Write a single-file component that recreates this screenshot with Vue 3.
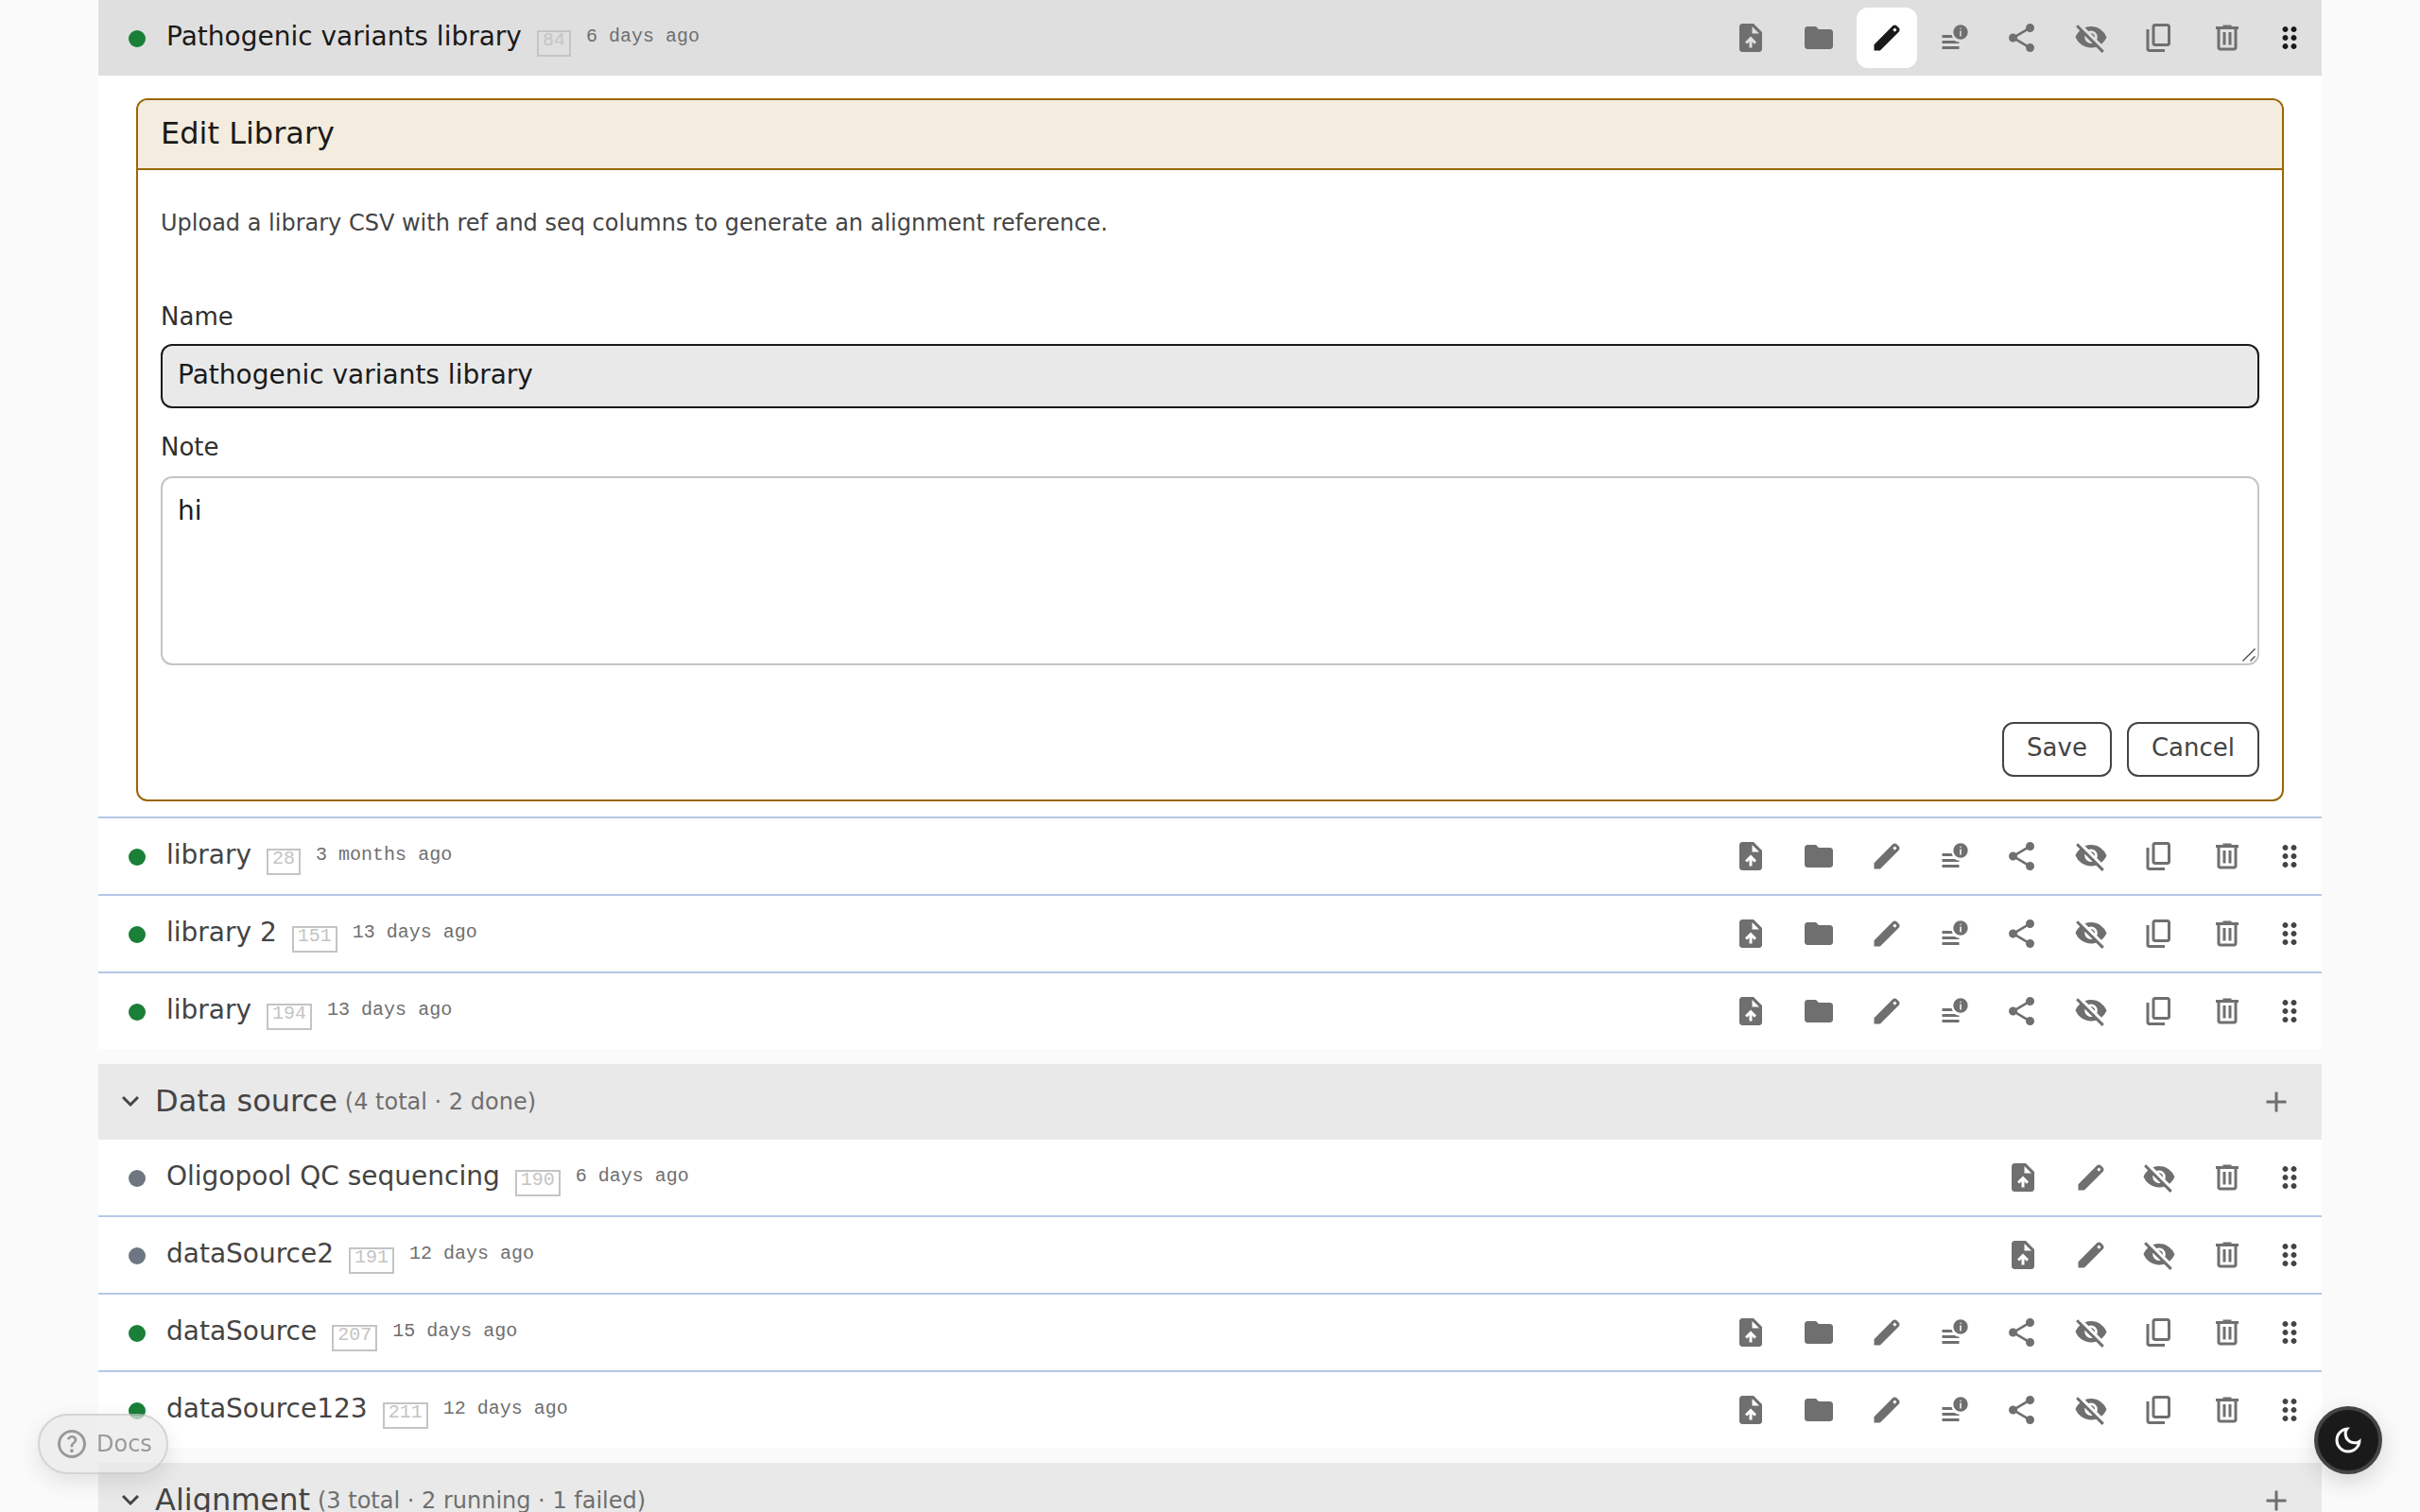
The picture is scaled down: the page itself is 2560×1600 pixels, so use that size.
<script setup>
import { ref } from "vue"

const icons = {
    upload: "M440-200h80v-167l64 64 56-57-160-160-160 160 57 56 63-63v167ZM240-80q-33 0-56.5-23.5T160-160v-640q0-33 23.5-56.5T240-880h320l240 240v480q0 33-23.5 56.5T720-80H240Zm280-520h200L520-800v200Z",
    folder: "M160-160q-33 0-56.5-23.5T80-240v-480q0-33 23.5-56.5T160-800h240l80 80h320q33 0 56.5 23.5T880-640v400q0 33-23.5 56.5T800-160H160Z",
    edit: "M120-120v-170l528-527q12-11 26.5-17t30.5-6q16 0 31 6t26 18l55 56q12 11 17.5 26t5.5 30q0 16-5.5 30.5T817-647L290-120H120Zm584-528 56-56-56-56-56 56 56 56Z",
    info: "M640-435q-85 0-145-60T435-640q0-85 60-145T640-845q85 0 145 60T845-640q0 85-60 145T640-435Zm-20-85h40v-160h-40v160Zm20-200q8 0 14-6t6-14q0-8-6-14t-14-6q-8 0-14 6t-6 14q0 8 6 14t14 6ZM120-160v-80h480v80H120Zm0-160v-80h360q25 20 54.500 30t65.500 10v40H120Zm0-160v-80h268q6 22 14 42t20 38H120Z",
    share: "M680-80q-50 0-85-35t-35-85q0-6 3-28L282-392q-16 15-37 23.5t-45 8.5q-50 0-85-35t-35-85q0-50 35-85t85-35q24 0 45 8.5t37 23.5l281-164q-2-7-2.5-13.5T560-760q0-50 35-85t85-35q50 0 85 35t35 85q0 50-35 85t-85 35q-24 0-45-8.5T598-672L317-508q2 7 2.5 13.5t.5 14.5q0 8-.5 14.5T317-452l281 164q16-15 37-23.5t45-8.5q50 0 85 35t35 85q0 50-35 85t-85 35Z",
    hide: "M792-56 624-222q-35 11-70.5 16.5T480-200q-151 0-269-83.5T40-500q21-53 53-98.5t73-81.5L56-792l56-56 736 736-56 56ZM480-320q11 0 20.5-1t20.5-4L305-541q-3 11-4 20.500t-1 20.500q0 75 52.500 127.500T480-320Zm292 18L645-428q7-17 11-34.500t4-37.500q0-75-52.500-127.500T480-680q-20 0-37.500 4T408-664L306-766q41-17 84-25.500t90-8.500q151 0 269 83.500T920-500q-23 59-60.500 109.500T772-302ZM587-486 467-606q28-5 51.500 4.500T559-574q17 18 24.500 41.500T587-486Z",
    copy: "M360-240q-33 0-56.5-23.5T280-320v-480q0-33 23.5-56.5T360-880h360q33 0 56.5 23.5T800-800v480q0 33-23.5 56.5T720-240H360Zm0-80h360v-480H360v480ZM200-80q-33 0-56.5-23.5T120-160v-560h80v560h440v80H200Z",
    trash: "M280-120q-33 0-56.5-23.5T200-200v-520h-40v-80h200v-40h240v40h200v80h-40v520q0 33-23.5 56.5T680-120H280Zm400-600H280v520h400v-520ZM360-280h80v-360h-80v360Zm160 0h80v-360h-80v360Z",
    drag: "M360-160q-33 0-56.5-23.5T280-240q0-33 23.5-56.5T360-320q33 0 56.5 23.5T440-240q0 33-23.5 56.5T360-160Zm240 0q-33 0-56.5-23.5T520-240q0-33 23.5-56.5T600-320q33 0 56.5 23.5T680-240q0 33-23.5 56.5T600-160ZM360-400q-33 0-56.5-23.5T280-480q0-33 23.5-56.5T360-560q33 0 56.5 23.5T440-480q0 33-23.5 56.5T360-400Zm240 0q-33 0-56.5-23.5T520-480q0-33 23.5-56.5T600-560q33 0 56.5 23.5T680-480q0 33-23.5 56.5T600-400ZM360-640q-33 0-56.5-23.5T280-720q0-33 23.5-56.5T360-800q33 0 56.5 23.5T440-720q0 33-23.5 56.5T360-640Zm240 0q-33 0-56.5-23.5T520-720q0-33 23.5-56.5T600-800q33 0 56.5 23.5T680-720q0 33-23.5 56.5T600-640Z",
    add: "M440-440H200v-80h240v-240h80v240h240v80H520v240h-80v-240Z",
    expand: "M480-344 240-584l56-56 184 184 184-184 56 56-240 240Z",
    help: "M478-240q21 0 35.5-14.5T528-290q0-21-14.5-35.5T478-340q-21 0-35.5 14.5T428-290q0 21 14.5 35.5T478-240Zm-36-154h74q0-33 7.5-52t42.5-52q26-26 41-49.5t15-56.5q0-56-41-86t-97-30q-57 0-92.5 30T342-618l66 26q5-18 22.5-39t53.5-21q32 0 48 17.5t16 38.5q0 20-12 37.5T506-526q-44 39-54 59t-10 73Zm38 314q-83 0-156-31.5T197-197q-54-54-85.5-127T80-480q0-83 31.5-156T197-763q54-54 127-85.5T480-880q83 0 156 31.5T763-763q54 54 85.5 127T880-480q0 83-31.5 156T763-197q-54 54-127 85.5T480-80Zm0-80q134 0 227-93t93-227q0-134-93-227t-227-93q-134 0-227 93t-93 227q0 134 93 227t227 93Z",
    moon: "M480-120q-150 0-255-105T120-480q0-150 105-255t255-105q14 0 27.5 1t26.5 3q-41 29-65.5 75.5T444-660q0 90 63 153t153 63q55 0 101-24.5t75-65.5q2 13 3 26.5t1 27.5q0 150-105 255T480-120Zm0-80q88 0 158-48.5T740-375q-20 5-40 8t-40 3q-123 0-209.5-86.5T364-660q0-20 3-40t8-40q-78 32-126.5 102T200-480q0 116 82 198t198 82Z",
}

const full = ['upload', 'folder', 'edit', 'info', 'share', 'hide', 'copy', 'trash']
const short = ['upload', 'edit', 'hide', 'trash']

const name = ref("Pathogenic variants library")
const note = ref("hi")
const editing = ref(84)

const groups = ref([
    {
        items: [
            { id: 84, name: "Pathogenic variants library", time: "6 days ago", status: "done", actions: full },
            { id: 28, name: "library", time: "3 months ago", status: "done", actions: full },
            { id: 151, name: "library 2", time: "13 days ago", status: "done", actions: full },
            { id: 194, name: "library", time: "13 days ago", status: "done", actions: full },
        ],
    },
    {
        title: "Data source",
        summary: "(4 total · 2 done)",
        items: [
            { id: 190, name: "Oligopool QC sequencing", time: "6 days ago", status: "idle", actions: short },
            { id: 191, name: "dataSource2", time: "12 days ago", status: "idle", actions: short },
            { id: 207, name: "dataSource", time: "15 days ago", status: "done", actions: full },
            { id: 211, name: "dataSource123", time: "12 days ago", status: "done", actions: full },
        ],
    },
    {
        title: "Alignment",
        summary: "(3 total · 2 running · 1 failed)",
        items: [],
    },
])

const actionClick = (item, action) => {
    if (action == 'edit') {
        editing.value = editing.value == item.id ? null : item.id;
    }
}
</script>

<template>
    <div class="page">
        <div class="group" v-for="(group, i) in groups" :key="i">
            <div class="group-header" v-if="group.title">
                <svg class="icon" viewBox="0 -960 960 960"><path :d="icons.expand" /></svg>
                <span class="group-title">{{ group.title }}</span>
                <span class="group-summary">{{ group.summary }}</span>
                <button class="action add"><svg class="icon" viewBox="0 -960 960 960"><path :d="icons.add" /></svg></button>
            </div>
            <div class="item" v-for="item in group.items" :key="item.id">
                <div class="row" :class="{ selected: editing == item.id }">
                    <span class="dot" :class="item.status"></span>
                    <span class="item-name">{{ item.name }}</span>
                    <span class="tag">{{ item.id }}</span>
                    <span class="time">{{ item.time }}</span>
                    <div class="actions">
                        <button
                            v-for="action in item.actions"
                            :key="action"
                            class="action"
                            :class="{ active: action == 'edit' && editing == item.id }"
                            @click="actionClick(item, action)"
                        >
                            <svg class="icon" viewBox="0 -960 960 960"><path :d="icons[action]" /></svg>
                        </button>
                        <svg class="icon drag" viewBox="0 -960 960 960"><path :d="icons.drag" /></svg>
                    </div>
                </div>
                <div class="editor" v-if="editing == item.id">
                    <div class="card">
                        <div class="card-title">Edit Library</div>
                        <div class="card-body">
                            <p class="hint">Upload a library CSV with ref and seq columns to generate an alignment reference.</p>
                            <label class="label" for="name">Name</label>
                            <input class="field name-field" id="name" v-model="name">
                            <label class="label note-label" for="note">Note</label>
                            <div class="note-wrap">
                                <textarea class="field note-field" id="note" v-model="note"></textarea>
                                <svg class="grip" viewBox="0 0 14 14"><path d="M0.500 13.500 13.500 0.500M8.500 13.500 13.500 8.500" /></svg>
                            </div>
                            <div class="buttons">
                                <button class="btn">Save</button>
                                <button class="btn">Cancel</button>
                            </div>
                        </div>
                    </div>
                </div>
            </div>
        </div>

        <a class="docs">
            <svg class="icon" viewBox="0 -960 960 960"><path :d="icons.help" /></svg>
            <span>Docs</span>
        </a>
        <button class="theme">
            <svg class="icon" viewBox="0 -960 960 960"><path :d="icons.moon" /></svg>
        </button>
    </div>
</template>

<style>
body {
    background: #fafafa;
    overflow: hidden;
}
</style>

<style scoped>
.page {
    height: 1600px;
    overflow: hidden;
    box-sizing: border-box;
    padding: 0 104px;
    font-family: "DejaVu Sans", sans-serif;
    color: #444;
}

button {
    font-family: inherit;
    cursor: pointer;
}

.group {
    margin-bottom: 16px;
}

.group-header {
    height: 80px;
    box-sizing: border-box;
    padding: 0 16px;
    display: flex;
    align-items: center;
    background: #e9e9e9;
}

.group-title {
    font-size: 32px;
    line-height: 38px;
    margin-left: 8px;
    padding-bottom: 2px;
}

.group-summary {
    font-size: 24px;
    line-height: 40px;
    margin-left: 8px;
    color: #6f6f6f;
}

.item {
    background: #fff;
}

.item + .item {
    border-top: 2px solid #b4c7e7;
}

.row {
    height: 80px;
    box-sizing: border-box;
    padding: 0 16px 0 32px;
    display: flex;
    align-items: center;
}

.selected {
    background: #dfdfdf;
}

.dot {
    width: 18px;
    height: 18px;
    margin-top: 2px;
    border-radius: 50%;
}

.done {
    background: #1a7f37;
}

.idle {
    background: #6e7781;
}

.item-name {
    font-size: 28px;
    line-height: 35px;
    margin-left: 22px;
    padding-bottom: 3px;
}

.selected .item-name {
    color: #1a1a1a;
}

.tag {
    height: 28px;
    box-sizing: border-box;
    margin: 12px 0 0 16px;
    padding: 0 4px;
    border: 2px solid #c4c4c4;
    font: 20px/17px "Liberation Mono", monospace;
    color: #c4c4c4;
}

.time {
    margin-left: 16px;
    padding-bottom: 3px;
    font: 20px/23px "Liberation Mono", monospace;
    color: #6f6f6f;
}

.actions {
    display: flex;
    align-items: center;
    gap: 8px;
    margin-left: auto;
}

.action {
    width: 64px;
    height: 64px;
    padding: 0;
    display: flex;
    align-items: center;
    justify-content: center;
    border: none;
    border-radius: 12px;
    background: none;
    color: #6f6f6f;
}

.add {
    margin-left: auto;
}

.active {
    background: #fff;
    color: #1a1a1a;
}

.icon {
    width: 36px;
    height: 36px;
    fill: currentColor;
}

.drag {
    margin-left: 8px;
}

.selected .drag {
    color: #1a1a1a;
}

.editor {
    padding: 24px 40px 16px;
}

.card {
    height: 744px;
    box-sizing: border-box;
    border: 2px solid #9a6700;
    border-radius: 12px;
    overflow: hidden;
}

.card-title {
    height: 72px;
    padding: 0 24px;
    border-bottom: 2px solid #9a6700;
    background: #f3ecdf;
    color: #1a1a1a;
    font-size: 32px;
    line-height: 70px;
}

.card-body {
    padding: 40px 24px 24px;
    display: flex;
    flex-direction: column;
}

.hint {
    margin: 0 0 65px;
    font-size: 24px;
    line-height: 32px;
}

.label {
    font-size: 26px;
    line-height: 36px;
    margin-bottom: 11px;
    color: #2f2f2f;
}

.field {
    box-sizing: border-box;
    margin: 0;
    border: 2px solid #c4c4c4;
    border-radius: 12px;
    outline: none;
    background: #fff;
    color: #1a1a1a;
    font-family: inherit;
    font-size: 28px;
}

.name-field {
    height: 68px;
    padding: 0 16px 4px;
    background: #e9e9e9;
    border-color: #1a1a1a;
}

.note-label {
    margin-top: 23px;
    margin-bottom: 13px;
}

.note-wrap {
    position: relative;
    height: 200px;
}

.note-field {
    display: block;
    width: 100%;
    height: 100%;
    padding: 17px 16px;
    line-height: 35px;
    resize: none;
}

.grip {
    position: absolute;
    right: 4px;
    bottom: 4px;
    width: 14px;
    height: 14px;
    fill: none;
    stroke: #444;
    stroke-width: 1.3;
}

.buttons {
    display: flex;
    justify-content: flex-end;
    gap: 16px;
    margin-top: 60px;
}

.btn {
    height: 58px;
    padding: 0 24px 4px;
    border: 2px solid #444;
    border-radius: 12px;
    background: #fff;
    color: #444;
    font-size: 26px;
}

.docs {
    position: fixed;
    left: 40px;
    bottom: 40px;
    height: 64px;
    box-sizing: border-box;
    padding: 0 15px 0 16px;
    display: flex;
    align-items: center;
    gap: 8px;
    border: 2px solid #c4c4c4;
    border-radius: 32px;
    background: #e9e9e9;
    box-shadow: 0 8px 24px rgba(0, 0, 0, 0.15);
    color: #6f6f6f;
    font-size: 24px;
    opacity: 0.7;
}

.theme {
    position: fixed;
    right: 40px;
    bottom: 40px;
    width: 72px;
    height: 72px;
    padding: 0;
    display: flex;
    align-items: center;
    justify-content: center;
    border: 4px solid #444;
    border-radius: 50%;
    background: #1a1a1a;
    box-shadow: 0 8px 24px rgba(0, 0, 0, 0.15);
    color: #fafafa;
}
</style>
